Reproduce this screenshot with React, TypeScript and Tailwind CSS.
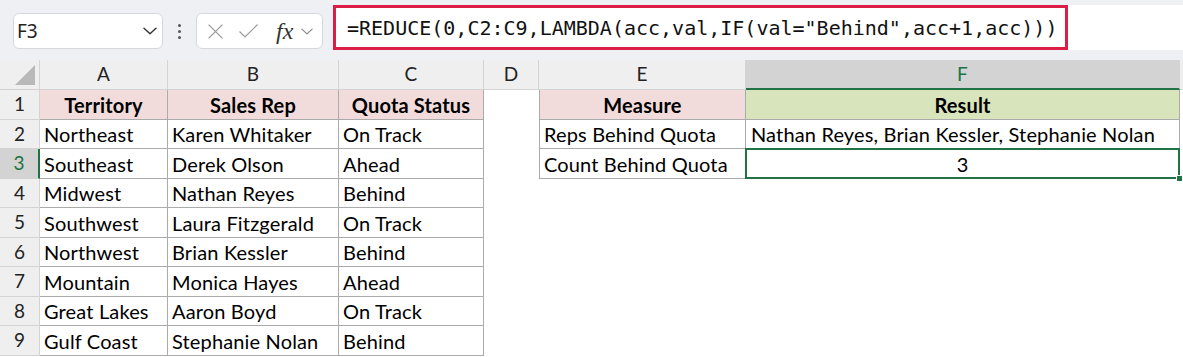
const data = [
  ["Northeast", "Karen Whitaker", "On Track"],
  ["Southeast", "Derek Olson", "Ahead"],
  ["Midwest", "Nathan Reyes", "Behind"],
  ["Southwest", "Laura Fitzgerald", "On Track"],
  ["Northwest", "Brian Kessler", "Behind"],
  ["Mountain", "Monica Hayes", "Ahead"],
  ["Great Lakes", "Aaron Boyd", "On Track"],
  ["Gulf Coast", "Stephanie Nolan", "Behind"],
];

const cols = [
  { key: "A", w: "w-[128px]" },
  { key: "B", w: "w-[171px]" },
  { key: "C", w: "w-[145px]" },
  { key: "D", w: "w-[55px]" },
  { key: "E", w: "w-[207px]" },
  { key: "F", w: "w-[434px]" },
];

const rowHeights = ["h-[30px]", "h-[29px]", "h-[30px]", "h-[29px]", "h-[30px]", "h-[29px]", "h-[30px]", "h-[29px]", "h-[30px]"];

const tableCell = "flex shrink-0 items-center border-r border-b border-[#ababab] px-[4px] whitespace-nowrap";

function Chevron({ className }: { className?: string }) {
  return (
    <svg viewBox="0 0 14 8" className={className} fill="none" stroke="currentColor" strokeWidth="1.4" strokeLinecap="round" strokeLinejoin="round">
      <path d="M1 1.2 7 6.8 13 1.2" />
    </svg>
  );
}

function Toolbar() {
  return (
    <div className="flex h-[60px] items-start bg-[#eef0f3]">
      <div className="ml-[13px] mt-[13px] flex h-[36px] w-[150px] items-center justify-between rounded-[6px] border border-[#d5d8dd] bg-white pl-[3px] pr-[5px]">
        <span className="font-['Noto_Sans',sans-serif] text-[19px] leading-none text-[#222]">F3</span>
        <Chevron className="h-[8px] w-[14px] text-[#333]" />
      </div>

      <div className="mt-[13px] flex h-[36px] w-[33px] flex-col items-center justify-center gap-[3px]">
        <span className="h-[3px] w-[3px] rounded-full bg-[#555]" />
        <span className="h-[3px] w-[3px] rounded-full bg-[#555]" />
        <span className="h-[3px] w-[3px] rounded-full bg-[#555]" />
      </div>

      <div className="mt-[13px] flex h-[36px] w-[127px] items-center rounded-[6px] border border-[#d5d8dd] bg-white">
        <svg viewBox="0 0 16 16" className="ml-[10px] h-[17px] w-[17px] text-[#9a9a9a]" fill="none" stroke="currentColor" strokeWidth="1.2">
          <path d="M1.5 1.5 14.5 14.5M14.5 1.5 1.5 14.5" />
        </svg>
        <svg viewBox="0 0 20 16" className="ml-[14px] h-[16px] w-[21px] text-[#9a9a9a]" fill="none" stroke="currentColor" strokeWidth="1.2">
          <path d="M1 8.5 6.5 14 19 1.5" />
        </svg>
        <span className="ml-[17px] font-['Liberation_Serif',serif] text-[24px] italic leading-none text-[#333]">fx</span>
        <Chevron className="ml-[8px] h-[7px] w-[12px] text-[#888]" />
      </div>

      <div className="ml-[10px] mt-[5px] flex h-[45px] flex-1 bg-white">
        <div className="flex h-full w-[735px] items-center border-[3px] border-[#dc1e46] pl-[11px] font-['DejaVu_Sans_Mono',monospace] text-[20px] whitespace-nowrap text-[#111]">
          =REDUCE(0,C2:C9,LAMBDA(acc,val,IF(val="Behind",acc+1,acc)))
        </div>
      </div>
    </div>
  );
}

function ColumnHeaders() {
  return (
    <div className="flex h-[30px] text-[19px]">
      <div className="relative w-[40px] shrink-0 border-r border-b border-[#d4d4d4] bg-[#efefef]">
        <svg viewBox="0 0 20 20" className="absolute bottom-[4px] right-[4px] h-[20px] w-[20px]">
          <polygon points="20,0 20,20 0,20" fill="#b9b9b9" />
        </svg>
      </div>
      {cols.map((c) =>
        c.key === "F" ? (
          <div key={c.key} className={`${c.w} flex shrink-0 items-center justify-center border-r border-b-2 border-r-[#d4d4d4] border-b-[#217346] bg-[#d3d3d3] text-[#217346]`}>
            {c.key}
          </div>
        ) : (
          <div key={c.key} className={`${c.w} flex shrink-0 items-center justify-center border-r border-b border-[#d4d4d4] bg-[#efefef] text-[#222]`}>
            {c.key}
          </div>
        )
      )}
      <div className="flex-1 border-b border-[#d4d4d4] bg-[#efefef]" />
    </div>
  );
}

function RowHeader({ n }: { n: number }) {
  if (n === 3) {
    return (
      <div className="flex w-[40px] shrink-0 items-center justify-center border-r-2 border-b border-r-[#217346] border-b-[#d4d4d4] bg-[#d3d3d3] text-[19px] text-[#217346]">
        {n}
      </div>
    );
  }
  return (
    <div className="flex w-[40px] shrink-0 items-center justify-center border-r border-b border-[#d4d4d4] bg-[#efefef] text-[19px] text-[#222]">
      {n}
    </div>
  );
}

function Grid() {
  return (
    <div className="text-[20px] tracking-[0.15px]">
      <ColumnHeaders />

      <div className={`flex ${rowHeights[0]}`}>
        <RowHeader n={1} />
        <div className={`${tableCell} w-[128px] justify-center bg-[#f2dcdb] font-bold`}>Territory</div>
        <div className={`${tableCell} w-[171px] justify-center bg-[#f2dcdb] font-bold`}>Sales Rep</div>
        <div className={`${tableCell} w-[145px] justify-center bg-[#f2dcdb] font-bold`}>Quota Status</div>
        <div className="w-[55px] shrink-0" />
        <div className={`${tableCell} w-[207px] justify-center border-l bg-[#f2dcdb] font-bold`}>Measure</div>
        <div className={`${tableCell} w-[434px] justify-center bg-[#d8e4bc] font-bold`}>Result</div>
      </div>

      {data.map((r, i) => {
        const n = i + 2;
        return (
          <div key={n} className={`flex ${rowHeights[i + 1]}`}>
            <RowHeader n={n} />
            <div className={`${tableCell} w-[128px]`}>{r[0]}</div>
            <div className={`${tableCell} w-[171px]`}>{r[1]}</div>
            <div className={`${tableCell} w-[145px]`}>{r[2]}</div>
            <div className="w-[55px] shrink-0" />
            {n === 2 && (
              <>
                <div className={`${tableCell} w-[207px] border-l`}>Reps Behind Quota</div>
                <div className={`${tableCell} w-[434px] pl-[5px]`}>Nathan Reyes, Brian Kessler, Stephanie Nolan</div>
              </>
            )}
            {n === 3 && (
              <>
                <div className={`${tableCell} w-[207px] border-l`}>Count Behind Quota</div>
                <div className={`${tableCell} relative w-[434px] justify-center`}>
                  3
                  <div className="absolute inset-[-1px] border-2 border-[#217346]" />
                  <div className="absolute bottom-[-4px] right-[-4px] h-[7px] w-[7px] border border-white bg-[#217346]" />
                </div>
              </>
            )}
          </div>
        );
      })}
    </div>
  );
}

export default function App() {
  return (
    <div className="h-[357px] w-[1183px] overflow-hidden bg-white font-['Lato',sans-serif] text-black">
      <Toolbar />
      <Grid />
    </div>
  );
}
